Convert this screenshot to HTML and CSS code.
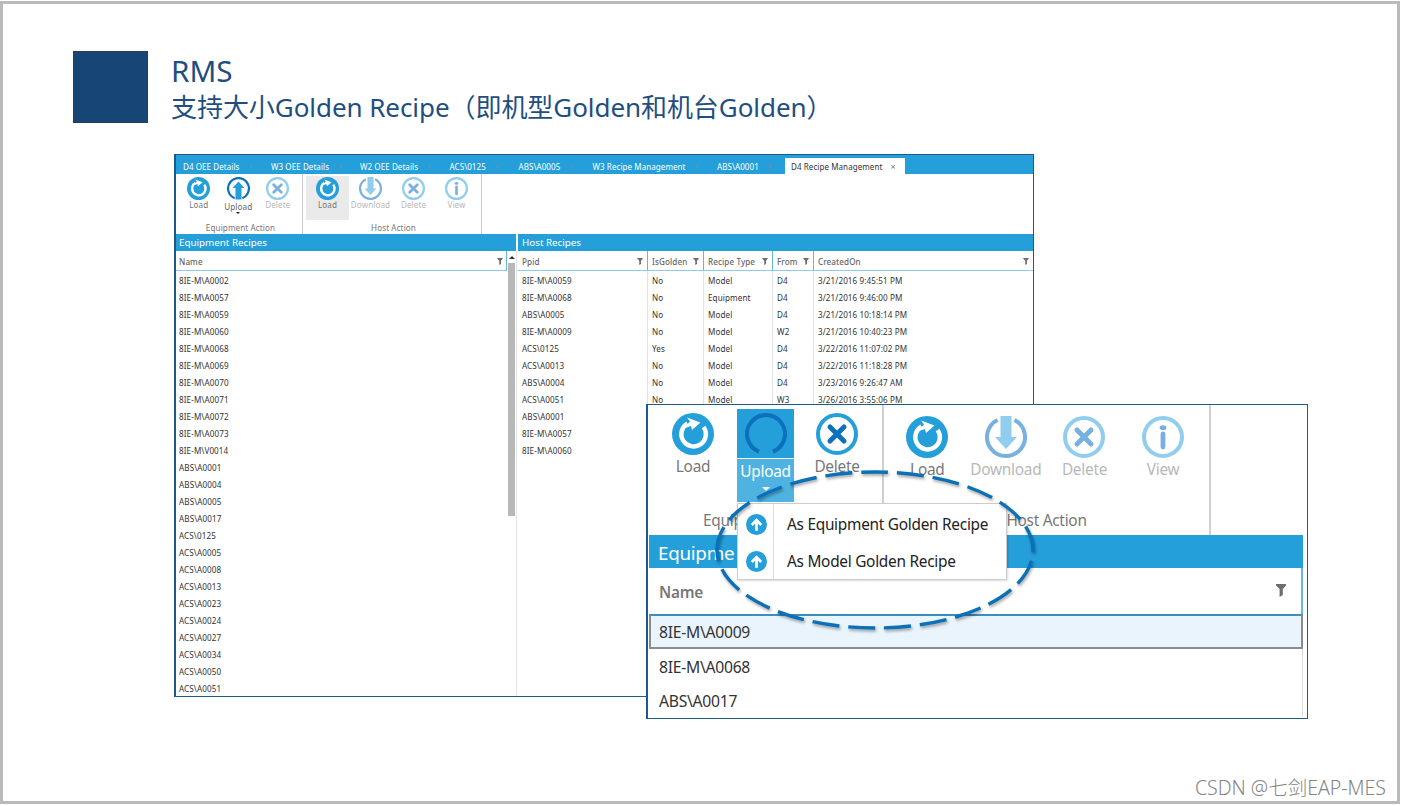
FILE: index.html
```html
<!DOCTYPE html>
<html lang="zh-CN">
<head>
    <meta charset="UTF-8">
    <meta name="viewport" content="width=device-width, initial-scale=1.0">
    <title>RMS - Golden Recipe</title>
    <link rel="stylesheet" href="styles.css">
</head>
<body>

<!-- Icon definitions -->
<svg class="defs">
    <symbol id="i-load" viewBox="0 0 42 42">
        <circle cx="21" cy="21" r="21" fill="#249fda"/>
        <path d="M31.6 14A12.3 12.3 0 1 1 15.5 10.5" fill="none" stroke="#fff" stroke-width="4.4"/>
        <path d="M15 4.5L28.5 9.5L20 17L19 13L11.5 15.5L18 8.5Z" fill="#fff"/>
    </symbol>
    <symbol id="i-upload" viewBox="0 0 42 42">
        <path d="M14 38.7A19 19 0 1 1 28 38.7" fill="none" stroke="#0c70bd" stroke-width="4"/>
        <path d="M21 8L32 20H26.5V41H15.5V20H10Z" fill="#249fda"/>
    </symbol>
    <symbol id="i-ring" viewBox="0 0 42 42">
        <path d="M14 38.7A19 19 0 1 1 28 38.7" fill="none" stroke="#0c70bd" stroke-width="4"/>
    </symbol>
    <symbol id="i-download" viewBox="0 0 42 42">
        <path d="M12.5 4A19 19 0 1 0 29.5 4" fill="none" stroke="#78b0e0" stroke-width="4"/>
        <path d="M15.5 0H26.5V21H32L21 33L10 21H15.5Z" fill="#90cdee"/>
    </symbol>
    <symbol id="i-delete" viewBox="0 0 42 42">
        <circle class="ring" cx="21" cy="21" r="19" fill="none" stroke-width="4"/>
        <path class="mark" d="M14 14L28 28M28 14L14 28" fill="none" stroke-width="5" stroke-linecap="round"/>
    </symbol>
    <symbol id="i-view" viewBox="0 0 42 42">
        <circle cx="21" cy="21" r="19" fill="none" stroke="#90cdee" stroke-width="4"/>
        <ellipse cx="21" cy="11.7" rx="3.4" ry="2.4" fill="#78b0e0"/>
        <path d="M21 18V31" stroke="#78b0e0" stroke-width="4.8" stroke-linecap="round"/>
    </symbol>
    <symbol id="i-filter" viewBox="0 0 10 13">
        <path d="M0 0H10V1.5L6.8 5V11L3.6 13V5L0 1.5Z" fill="#6d6d6d"/>
    </symbol>
    <symbol id="i-golden" viewBox="0 0 20 20">
        <circle cx="10" cy="10" r="10" fill="#249fda"/>
        <path d="M10 16V6M5.5 10.5L10 6L14.5 10.5" fill="none" stroke="#fff" stroke-width="2.6"/>
    </symbol>
</svg>

<div class="slide">
    <header class="slide-header">
        <div class="square"></div>
        <div class="titles">
            <h1>RMS</h1>
            <h2>支持大小Golden Recipe（即机型Golden和机台Golden）</h2>
        </div>
    </header>

    <!-- Main window -->
    <div class="window">
        <nav class="tabs">
            <span class="tab">D4 OEE Details <i>×</i></span>
            <span class="tab">W3 OEE Details <i>×</i></span>
            <span class="tab">W2 OEE Details <i>×</i></span>
            <span class="tab">ACS\0125 <i>×</i></span>
            <span class="tab">ABS\A0005 <i>×</i></span>
            <span class="tab">W3 Recipe Management <i>×</i></span>
            <span class="tab">ABS\A0001 <i>×</i></span>
            <span class="tab active">D4 Recipe Management <i>×</i></span>
        </nav>

        <div class="ribbon">
            <div class="group equipment">
                <div class="buttons">
                    <div class="btn"><svg><use href="#i-load"/></svg>Load</div>
                    <div class="btn dark"><svg><use href="#i-upload"/></svg>Upload<b class="caret"></b></div>
                    <div class="btn off"><svg><use href="#i-delete"/></svg>Delete</div>
                </div>
                <div class="group-name">Equipment Action</div>
            </div>
            <div class="group host">
                <div class="buttons">
                    <div class="btn hover"><svg><use href="#i-load"/></svg>Load</div>
                    <div class="btn off"><svg><use href="#i-download"/></svg>Download</div>
                    <div class="btn off"><svg><use href="#i-delete"/></svg>Delete</div>
                    <div class="btn off"><svg><use href="#i-view"/></svg>View</div>
                </div>
                <div class="group-name">Host Action</div>
            </div>
        </div>

        <div class="panels">
            <section class="panel">
                <h3>Equipment Recipes</h3>
                <div class="list-area">
                    <div class="list">
                        <div class="list-head">Name <svg class="filter"><use href="#i-filter"/></svg></div>
                        <ul>
                            <li>8IE-M\A0002</li>
                            <li>8IE-M\A0057</li>
                            <li>8IE-M\A0059</li>
                            <li>8IE-M\A0060</li>
                            <li>8IE-M\A0068</li>
                            <li>8IE-M\A0069</li>
                            <li>8IE-M\A0070</li>
                            <li>8IE-M\A0071</li>
                            <li>8IE-M\A0072</li>
                            <li>8IE-M\A0073</li>
                            <li>8IE-M\V0014</li>
                            <li>ABS\A0001</li>
                            <li>ABS\A0004</li>
                            <li>ABS\A0005</li>
                            <li>ABS\A0017</li>
                            <li>ACS\0125</li>
                            <li>ACS\A0005</li>
                            <li>ACS\A0008</li>
                            <li>ACS\A0013</li>
                            <li>ACS\A0023</li>
                            <li>ACS\A0024</li>
                            <li>ACS\A0027</li>
                            <li>ACS\A0034</li>
                            <li>ACS\A0050</li>
                            <li>ACS\A0051</li>
                        </ul>
                    </div>
                    <div class="scrollbar"><b class="up"></b><div class="thumb"></div></div>
                </div>
            </section>

            <section class="panel">
                <h3>Host Recipes</h3>
                <table>
                    <colgroup><col class="c1"><col class="c2"><col class="c3"><col class="c4"><col></colgroup>
                    <thead>
                        <tr>
                            <th><div>Ppid <svg class="filter"><use href="#i-filter"/></svg></div></th>
                            <th><div>IsGolden <svg class="filter"><use href="#i-filter"/></svg></div></th>
                            <th><div>Recipe Type <svg class="filter"><use href="#i-filter"/></svg></div></th>
                            <th><div>From <svg class="filter"><use href="#i-filter"/></svg></div></th>
                            <th><div>CreatedOn <svg class="filter"><use href="#i-filter"/></svg></div></th>
                        </tr>
                    </thead>
                    <tbody>
                        <tr><td>8IE-M\A0059</td><td>No</td><td>Model</td><td>D4</td><td>3/21/2016 9:45:51 PM</td></tr>
                        <tr><td>8IE-M\A0068</td><td>No</td><td>Equipment</td><td>D4</td><td>3/21/2016 9:46:00 PM</td></tr>
                        <tr><td>ABS\A0005</td><td>No</td><td>Model</td><td>D4</td><td>3/21/2016 10:18:14 PM</td></tr>
                        <tr><td>8IE-M\A0009</td><td>No</td><td>Model</td><td>W2</td><td>3/21/2016 10:40:23 PM</td></tr>
                        <tr><td>ACS\0125</td><td>Yes</td><td>Model</td><td>D4</td><td>3/22/2016 11:07:02 PM</td></tr>
                        <tr><td>ACS\A0013</td><td>No</td><td>Model</td><td>D4</td><td>3/22/2016 11:18:28 PM</td></tr>
                        <tr><td>ABS\A0004</td><td>No</td><td>Model</td><td>D4</td><td>3/23/2016 9:26:47 AM</td></tr>
                        <tr><td>ACS\A0051</td><td>No</td><td>Model</td><td>W3</td><td>3/26/2016 3:55:06 PM</td></tr>
                        <tr><td>ABS\A0001</td><td></td><td></td><td></td><td></td></tr>
                        <tr><td>8IE-M\A0057</td><td></td><td></td><td></td><td></td></tr>
                        <tr><td>8IE-M\A0060</td><td></td><td></td><td></td><td></td></tr>
                    </tbody>
                </table>
            </section>
        </div>
    </div>

    <!-- Enlarged window on top of the main one -->
    <div class="detail">
        <div class="d-ribbon">
            <div class="d-group first">
                <div class="d-buttons">
                    <div class="d-btn"><svg><use href="#i-load"/></svg>Load</div>
                    <div class="d-btn pressed">
                        <div class="d-top"><svg><use href="#i-ring"/></svg></div>
                        <div class="d-bottom">Upload<b class="caret"></b></div>
                    </div>
                    <div class="d-btn"><svg><use href="#i-delete"/></svg>Delete</div>
                </div>
                <div class="d-name">Equip</div>
            </div>
            <div class="d-group second">
                <div class="d-buttons">
                    <div class="d-btn"><svg><use href="#i-load"/></svg>Load</div>
                    <div class="d-btn off"><svg><use href="#i-download"/></svg>Download</div>
                    <div class="d-btn off"><svg><use href="#i-delete"/></svg>Delete</div>
                    <div class="d-btn off"><svg><use href="#i-view"/></svg>View</div>
                </div>
                <div class="d-name">Host Action</div>
            </div>
        </div>
        <div class="d-body">
            <h3>Equipme</h3>
            <div class="d-head">Name <svg class="filter"><use href="#i-filter"/></svg></div>
            <div class="d-row selected">8IE-M\A0009</div>
            <div class="d-row">8IE-M\A0068</div>
            <div class="d-row">ABS\A0017</div>
        </div>

        <div class="menu">
            <div class="menu-item"><svg><use href="#i-golden"/></svg><span>As Equipment Golden Recipe</span></div>
            <div class="menu-item"><svg><use href="#i-golden"/></svg><span>As Model Golden Recipe</span></div>
        </div>

        <svg class="callout" viewBox="0 0 326 166">
            <path d="M5 83A158 78 0 0 1 321 83A158 78 0 0 1 5 83"/>
        </svg>
    </div>

    <div class="watermark">CSDN @七剑EAP-MES</div>
</div>

</body>
</html>
```

FILE: styles.css
```css
* {
    box-sizing: border-box;
}

body {
    margin: 0;
    width: 1401px;
    height: 806px;
    overflow: hidden;
    background: #fff;
    font-family: "Noto Sans", "Noto Sans CJK SC", sans-serif;
}

h1, h2, h3, ul {
    margin: 0;
    padding: 0;
    font-weight: 400;
}

.defs {
    position: absolute;
    width: 0;
    height: 0;
}

svg {
    display: block;
    flex: none;
}

/* Slide */
.slide {
    position: relative;
    height: 803px;
    width: 1400px;
    margin-top: 1px;
    border: 3px solid #bababa;
    padding: 47px 0 0 70px;
}

.slide-header {
    display: flex;
    height: 103px;
    gap: 23px;
}

.square {
    width: 75px;
    height: 72px;
    background: #174575;
    border: 1px solid #2b3d50;
}

.titles {
    color: #1f4e80;
    white-space: nowrap;
}

h1 {
    font-size: 29.6px;
    line-height: 39px;
}

h2 {
    font-size: 26px;
    line-height: 35px;
    letter-spacing: -0.06px;
}

/* Main window */
.window {
    width: 860px;
    height: 543px;
    margin-left: 101px;
    border: 1px solid #1c5b87;
    border-width: 1px 1px 1px 2px;
    overflow: hidden;
    font-size: 8.1px;
    color: #333;
    letter-spacing: 0.1px;
}

.tabs {
    display: grid;
    grid-template-columns: 88px 89px 89.5px 69px 74px 124.5px 74px 120px;
    height: 19px;
    padding: 3px 0 0 1px;
    background: #249fda;
    color: #fff;
    font-size: 8px;
    line-height: 17px;
    letter-spacing: 0.08px;
    white-space: nowrap;
}

.tab {
    padding-left: 6px;
}

.tab i {
    margin-left: 6px;
    color: #6a8ea6;
    font-style: normal;
}

.tab.active {
    background: #fff;
    color: #333;
}

.tab.active i {
    color: #777;
    font-size: 9px;
    line-height: 1;
}

/* Ribbon */
.ribbon {
    display: flex;
    height: 60px;
    color: #777;
}

.group {
    display: flex;
    flex-direction: column;
    justify-content: space-between;
    border-right: 1px solid #ccc;
}

.group.equipment {
    width: 127px;
    padding-left: 3px;
}

.group.host {
    width: 179px;
    padding-left: 3px;
}

.buttons {
    display: flex;
    padding-top: 2px;
}

.btn {
    display: flex;
    flex-direction: column;
    align-items: center;
    width: 39.5px;
    height: 44px;
    padding-top: 1px;
    line-height: 10px;
}

.host .btn {
    width: 43px;
}

.btn svg {
    width: 23px;
    height: 23px;
}

.btn.dark svg {
    margin-bottom: 2px;
}

.btn.dark {
    color: #666;
}

.btn.hover {
    background: #eaeaea;
}

.btn.off, .d-btn.off {
    color: #b8b8b8;
}

.off svg {
    --ring: #90cdee;
    --mark: #78b0e0;
}

.ring {
    stroke: var(--ring, #249fda);
}

.mark {
    stroke: var(--mark, #0c70bd);
}

.caret {
    border: 2.5px solid transparent;
    border-top-color: #222;
    border-bottom: 0;
}

.group-name {
    text-align: center;
    line-height: 12px;
}

/* Panels */
.panels {
    display: grid;
    grid-template-columns: 340px 1fr;
    gap: 2px;
}

.panel h3 {
    height: 17px;
    padding-left: 3px;
    background: #249fda;
    color: #fff;
    font-size: 9.8px;
    line-height: 17px;
    letter-spacing: 0;
}

.panel + .panel h3 {
    padding-left: 4px;
}

.list-area {
    display: flex;
    height: 446px;
    border-right: 1px solid #e4e4e4;
    margin-right: -1px;
}

.list {
    width: 332px;
}

.list-head {
    display: flex;
    align-items: center;
    justify-content: space-between;
    height: 20px;
    padding: 2px 3px 0 3px;
    border-right: 1px solid #66b8df;
    border-bottom: 1px solid #8ecbe8;
    color: #666;
    font-weight: 500;
}

.filter {
    width: 6px;
    height: 7px;
    margin-bottom: 1px;
}

ul {
    list-style: none;
}

li {
    height: 17px;
    padding-left: 3px;
    line-height: 19px;
}

.scrollbar {
    display: flex;
    flex-direction: column;
    align-items: center;
    width: 9px;
    padding-top: 5px;
}

.up {
    margin-bottom: 4px;
    border: 3px solid transparent;
    border-top: 0;
    border-bottom-color: #333;
}

.thumb {
    width: 7px;
    height: 253px;
    background: #b8b8b8;
}

table {
    width: 100%;
    table-layout: fixed;
    border-collapse: separate;
    border-spacing: 0;
}

.c1 { width: 130px; }
.c2 { width: 56px; }
.c3 { width: 69px; }
.c4 { width: 41px; }

th {
    height: 20px;
    padding: 2px 4px 0 4px;
    border-right: 1px solid #66b8df;
    border-bottom: 1px solid #8ecbe8;
    color: #666;
    font-weight: 500;
    white-space: nowrap;
}

th div {
    display: flex;
    align-items: center;
    justify-content: space-between;
}

td {
    height: 17px;
    padding: 2px 0 0 4px;
    border-right: 1px solid #e2e2e2;
    line-height: 15px;
    white-space: nowrap;
}

th:last-child, td:last-child {
    border-right: 0;
}

/* Enlarged window */
.detail {
    position: absolute;
    left: 643px;
    top: 400px;
    width: 662px;
    height: 315px;
    border: 1px solid #1c5b87;
    border-left-width: 2px;
    padding-left: 1px;
    background: #fff;
    color: #777;
    font-size: 15.4px;
    letter-spacing: -0.27px;
    overflow: hidden;
}

.d-ribbon {
    display: flex;
    height: 130px;
}

.d-group {
    border-right: 2px solid #d0d0d0;
}

.d-group.first {
    width: 235px;
    padding-left: 1px;
}

.d-group.second {
    width: 327px;
    padding-left: 4px;
}

.d-buttons {
    display: flex;
    height: 105px;
}

.d-btn {
    display: flex;
    flex-direction: column;
    align-items: center;
    line-height: 23px;
}

.d-btn svg {
    width: 42px;
    height: 42px;
}

.d-group.first .d-btn {
    width: 86px;
    padding-top: 8px;
}

.d-group.second .d-btn {
    width: 78.6px;
    padding-top: 11px;
}

.d-group.first .d-btn.pressed {
    display: block;
    width: 57px;
    height: 93px;
    margin: 4px 0 0 1px;
    padding: 0;
    color: #fff;
    text-align: center;
}

.d-top {
    display: flex;
    justify-content: center;
    height: 50px;
    padding-top: 4px;
    background: #249fda;
    border-bottom: 1px solid #fff;
}

.d-bottom {
    height: 43px;
    padding-top: 1px;
    background: #4fb3e1;
}

.d-bottom .caret {
    display: block;
    width: 0;
    margin: 4px auto 0;
    border-width: 4px 4px 0;
    border-top-color: #fff;
}

.d-name {
    line-height: 22px;
    text-align: center;
}

.second .d-name {
    padding-right: 4px;
}

.first .d-name {
    padding-left: 53px;
    text-align: left;
}

.d-body {
    width: 654px;
    color: #333;
}

.d-body h3 {
    height: 33px;
    padding-left: 9px;
    background: #249fda;
    color: #fff;
    font-size: 18.8px;
    line-height: 36px;
}

.d-head {
    display: flex;
    align-items: center;
    justify-content: space-between;
    height: 46px;
    padding: 3px 15px 0 10px;
    border-right: 2px solid #66b8df;
    color: #777;
    font-weight: 600;
}

.d-head .filter {
    width: 10px;
    height: 13px;
    margin-bottom: 4px;
}

.d-row {
    height: 34px;
    padding-left: 10px;
    border-right: 1px solid #ddd;
    font-size: 15.7px;
    line-height: 36px;
}

.d-row.selected {
    height: 35px;
    padding-left: 8px;
    background: #eaf4fc;
    border: 2px solid #8c8c8c;
    border-top-color: #3b8fbd;
    line-height: 33px;
}

/* Upload menu */
.menu {
    position: absolute;
    left: 89px;
    top: 98px;
    width: 270px;
    height: 77px;
    padding-bottom: 2px;
    background: linear-gradient(to right, #fff 35px, #ddd 35px, #ddd 36px, #fff 36px);
    border: 1px solid #ccc;
    box-shadow: 1px 1px 2px rgba(0, 0, 0, 0.15);
    color: #222;
}

.menu-item {
    display: flex;
    align-items: center;
    gap: 20px;
    height: 37px;
    padding: 3px 0 0 8px;
    white-space: nowrap;
}

.menu-item svg {
    width: 21px;
    height: 21px;
}

/* Dashed ellipse around the menu */
.callout {
    position: absolute;
    left: 64px;
    top: 62px;
    width: 326px;
    height: 166px;
    overflow: visible;
    filter: drop-shadow(1px 2px 1.5px rgba(0, 0, 0, 0.35));
}

.callout path {
    fill: none;
    stroke: #0a70b8;
    stroke-width: 3.4;
    stroke-dasharray: 27 8.9;
    stroke-dashoffset: 2.8;
}

.watermark {
    position: absolute;
    right: 11px;
    bottom: 1px;
    color: #858585;
    font-size: 19.5px;
    font-weight: 300;
    line-height: 24px;
}
```
